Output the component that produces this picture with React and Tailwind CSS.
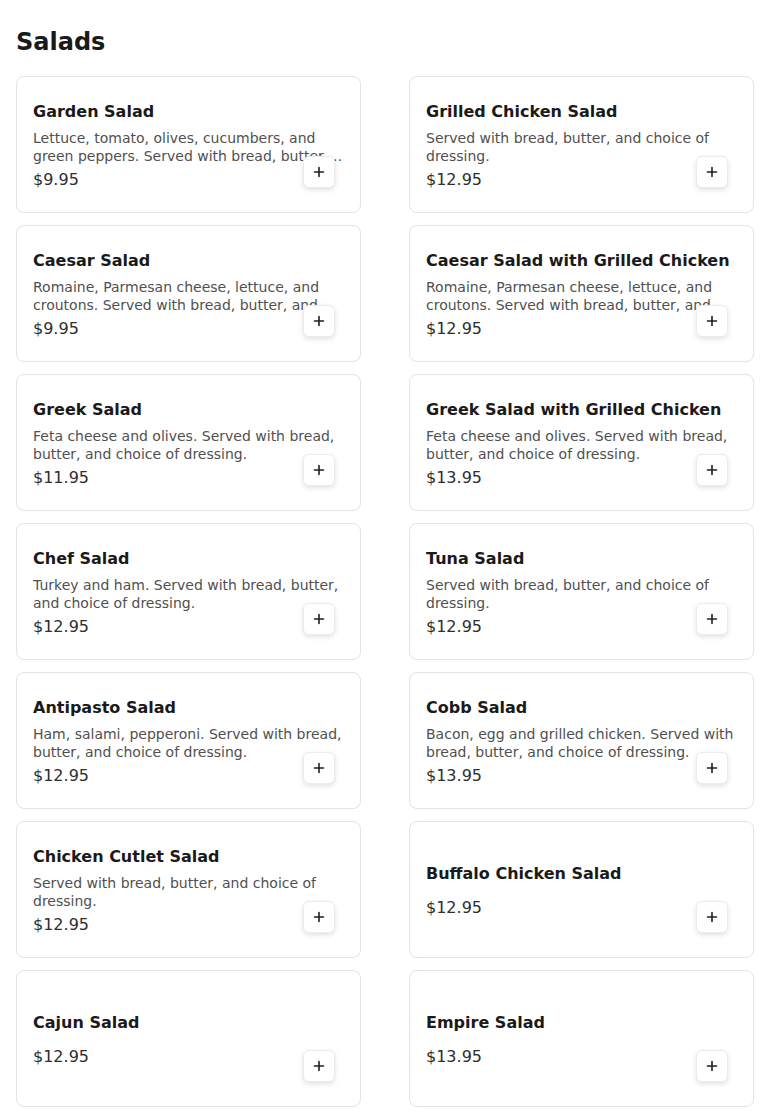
import React from "react";

const items = [
  { name: "Garden Salad", desc: "Lettuce, tomato, olives, cucumbers, and green peppers. Served with bread, butter, and choice of dressing.", price: "$9.95" },
  { name: "Grilled Chicken Salad", desc: "Served with bread, butter, and choice of dressing.", price: "$12.95" },
  { name: "Caesar Salad", desc: "Romaine, Parmesan cheese, lettuce, and croutons. Served with bread, butter, and choice of dressing.", price: "$9.95" },
  { name: "Caesar Salad with Grilled Chicken", desc: "Romaine, Parmesan cheese, lettuce, and croutons. Served with bread, butter, and choice of dressing.", price: "$12.95" },
  { name: "Greek Salad", desc: "Feta cheese and olives. Served with bread, butter, and choice of dressing.", price: "$11.95" },
  { name: "Greek Salad with Grilled Chicken", desc: "Feta cheese and olives. Served with bread, butter, and choice of dressing.", price: "$13.95" },
  { name: "Chef Salad", desc: "Turkey and ham. Served with bread, butter, and choice of dressing.", price: "$12.95" },
  { name: "Tuna Salad", desc: "Served with bread, butter, and choice of dressing.", price: "$12.95" },
  { name: "Antipasto Salad", desc: "Ham, salami, pepperoni. Served with bread, butter, and choice of dressing.", price: "$12.95" },
  { name: "Cobb Salad", desc: "Bacon, egg and grilled chicken. Served with bread, butter, and choice of dressing.", price: "$13.95" },
  { name: "Chicken Cutlet Salad", desc: "Served with bread, butter, and choice of dressing.", price: "$12.95" },
  { name: "Buffalo Chicken Salad", desc: "", price: "$12.95" },
  { name: "Cajun Salad", desc: "", price: "$12.95" },
  { name: "Empire Salad", desc: "", price: "$13.95" },
];

function PlusIcon() {
  return (
    <svg width="12" height="12" viewBox="0 0 12 12" fill="none">
      <path d="M6 1.5V10.5M1.5 6H10.5" stroke="#1f1f1f" strokeWidth="1.6" strokeLinecap="round" />
    </svg>
  );
}

function Card({ item }) {
  return (
    <div className="relative h-[137px] rounded-lg border border-[#e3e3e3] bg-white px-4 pt-[3px] flex flex-col justify-center">
      <h3 className="text-base leading-6 font-bold text-[#1a1a1a]">{item.name}</h3>
      {item.desc ? (
        <p className="mt-[6px] text-sm leading-[17.5px] text-[#505050] line-clamp-2">{item.desc}</p>
      ) : null}
      <p className={(item.desc ? "mt-[3px]" : "mt-[10px]") + " text-base leading-6 text-[#2e2e2e]"}>{item.price}</p>
      <button className="absolute right-[25px] bottom-6 flex h-8 w-8 items-center justify-center rounded-md border border-[#ececec] bg-white shadow-[0_2px_5px_rgba(0,0,0,0.12)]">
        <PlusIcon />
      </button>
    </div>
  );
}

export default function App() {
  return (
    <div className="min-h-screen bg-white px-4 pt-[26px] pb-3 font-['DejaVu_Sans',sans-serif]">
      <h2 className="mb-[18px] text-2xl leading-8 font-bold text-[#1a1a1a]">Salads</h2>
      <div className="grid grid-cols-2 gap-x-12 gap-y-3">
        {items.map((it) => (
          <Card key={it.name} item={it} />
        ))}
      </div>
    </div>
  );
}
